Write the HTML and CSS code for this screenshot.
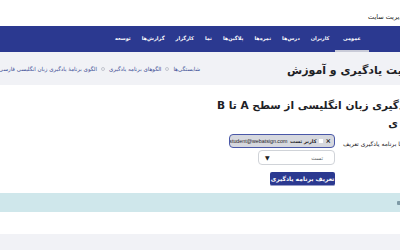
FILE: index.html
```html
<!DOCTYPE html>
<html lang="fa">
<head>
<meta charset="utf-8">
<link rel="stylesheet" href="styles.css">
</head>
<body>
<div class="page">
  <header class="topbar">
    <div class="clip-left topbar-clip"><span class="rtl-run site-name">مدیریت سایت</span></div>
  </header>
  <nav class="nav">
    <a class="nav-item active">عمومی</a>
    <a class="nav-item">کاربران</a>
    <a class="nav-item">درس‌ها</a>
    <a class="nav-item">نمره‌ها</a>
    <a class="nav-item">پلاگین‌ها</a>
    <a class="nav-item">نما</a>
    <a class="nav-item">کارگزار</a>
    <a class="nav-item">گزارش‌ها</a>
    <a class="nav-item">توسعه</a>
  </nav>
  <div class="pagehead">
    <div class="clip-left title-wrap"><span class="rtl-run page-title">مدیریت یادگیری و آموزش</span></div>
    <ol class="crumbs">
      <li class="crumb">شایستگی‌ها</li>
      <li class="sep"></li>
      <li class="crumb">الگوهای برنامه یادگیری</li>
      <li class="sep"></li>
      <li class="crumb">الگوی برنامهٔ یادگیری زبان انگلیسی فارسی‌زبانان</li>
    </ol>
  </div>
  <main class="main">
    <h2 class="heading">
      <div class="clip-left heading-l1"><span class="rtl-run">تعریف الگوی برنامهٔ یادگیری زبان انگلیسی از سطح A تا B</span></div>
      <div class="heading-l2">ی</div>
    </h2>
    <form class="form-row">
      <div class="clip-left label-col"><span class="rtl-run form-label">کاربرانی که برای آنها برنامه یادگیری تعریف</span></div>
      <div class="field-col">
        <div class="selection">
          <span class="sel-x">×</span>
          <span class="sel-box"></span>
          <span class="sel-name">کاربر تست</span>
          <span class="sel-mail">student@webatsign.com</span>
        </div>
        <div class="select">
          <span class="select-text">تست</span>
          <span class="select-arrow">▼</span>
        </div>
        <button class="btn" type="button">تعریف برنامه یادگیری</button>
      </div>
    </form>
  </main>
  <div class="alert"><span class="alert-icon"></span></div>
  <footer class="footer"></footer>
</div>
</body>
</html>
```
FILE: styles.css
```css
html, body {
  margin: 0;
  padding: 0;
  overflow: hidden;
  background: #ffffff;
}
body {
  width: 400px;
  height: 250px;
  font-family: "DejaVu Sans", "Noto Sans", sans-serif;
  color: #1d2125;
}
.page {
  direction: rtl;
  width: 400px;
  height: 250px;
  overflow: hidden;
  display: flex;
  flex-direction: column;
}
.clip-left {
  direction: ltr;
  text-align: left;
  white-space: nowrap;
}
.rtl-run {
  display: inline-block;
  direction: rtl;
  white-space: nowrap;
}
.topbar {
  height: 26px;
  flex: none;
  display: flex;
  align-items: center;
}
.topbar-clip {
  padding-left: 368px;
  width: 32px;
}
.site-name {
  font-size: 6.5px;
  color: #222;
  margin-top: -2px;
}
.nav {
  height: 26px;
  flex: none;
  background: #2b3990;
  display: flex;
  align-items: stretch;
  padding-right: 31px;
  box-sizing: border-box;
}
.nav-item {
  display: flex;
  align-items: center;
  padding: 0 5.5px;
  font-size: 5px;
  font-weight: bold;
  color: #ffffff;
  border-bottom: 2px solid transparent;
}
.nav-item.active {
  padding: 0 8px;
  border-bottom-color: #c9cbd8;
}
.pagehead {
  height: 33px;
  flex: none;
  background: #f1f2f6;
  display: flex;
  align-items: center;
  gap: 87px;
}
.title-wrap {
  flex: none;
  width: 113px;
}
.page-title {
  font-size: 11px;
  font-weight: bold;
  color: #1d2125;
}
.crumbs {
  list-style: none;
  margin: 0;
  padding: 0;
  display: flex;
  align-items: center;
  gap: 4px;
  white-space: nowrap;
  font-size: 5.5px;
  color: #3b4c95;
  flex: 1;
  min-width: 0;
}
.sep {
  width: 2px;
  height: 2px;
  border: 0.7px solid #c3c6d0;
  border-radius: 50%;
  flex: none;
}
.main {
  flex: none;
  padding-top: 11px;
}
.heading {
  margin: 0;
  font-size: 10.6px;
  font-weight: bold;
  line-height: 18px;
  color: #1d2125;
}
.heading-l1 {
  padding-left: 217px;
}
.heading-l2 {
  padding-right: 2px;
}
.form-row {
  margin: 2px 0 0 0;
  display: flex;
  gap: 8px;
}
.label-col {
  flex: none;
  width: 57px;
  line-height: 14px;
}
.form-label {
  font-size: 6px;
  color: #1d2125;
}
.field-col {
  display: flex;
  flex-direction: column;
  align-items: flex-start;
}
.selection {
  width: 106px;
  height: 14px;
  box-sizing: border-box;
  border: 1.5px solid #4a58a8;
  border-radius: 4px;
  background: #d6d8de;
  display: flex;
  align-items: center;
  gap: 2.5px;
  padding-right: 3px;
  font-size: 5px;
  color: #1d2125;
  white-space: nowrap;
  overflow: hidden;
}
.sel-x {
  font-size: 6.5px;
  font-weight: bold;
  line-height: 1;
}
.sel-box {
  width: 4px;
  height: 4px;
  background: #ffffff;
  flex: none;
}
.sel-name {
  font-weight: bold;
}
.sel-mail {
  font-family: "Liberation Sans", sans-serif;
  font-size: 5.3px;
}
.select {
  margin-top: 2px;
  width: 77px;
  height: 15px;
  box-sizing: border-box;
  border: 1px solid #d0d3d8;
  border-radius: 4px;
  background: #ffffff;
  display: flex;
  align-items: center;
  padding: 0 11px 0 6px;
}
.select-text {
  font-size: 5.5px;
  color: #5b5f66;
  margin-left: auto;
}
.select-arrow {
  order: 2;
  font-size: 6px;
  color: #1d2125;
}
.btn {
  margin-top: 7px;
  width: 65px;
  height: 14px;
  border: none;
  border-bottom: 1px solid #9aa0c8;
  border-radius: 2px;
  background: #2b3990;
  color: #ffffff;
  font-family: "DejaVu Sans", sans-serif;
  font-size: 6px;
  font-weight: bold;
  padding: 0;
  direction: rtl;
}
.alert {
  margin-top: 7px;
  height: 19px;
  flex: none;
  background: #cfe7eb;
  display: flex;
  align-items: center;
}
.alert-icon {
  width: 4px;
  height: 4px;
  margin-right: -1px;
  background: #7e9aa6;
  border-radius: 1px;
}
.footer {
  margin-top: 22px;
  flex: 1;
  background: #f1f2f6;
}
```
